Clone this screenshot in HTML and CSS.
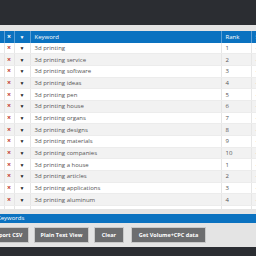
FILE: index.html
```html
<!DOCTYPE html>
<html lang="en">
<head>
    <meta charset="UTF-8">
    <title>Keyword Tool</title>
    <link rel="stylesheet" href="styles.css">
</head>
<body>

    <!-- Top bar -->
    <header class="topbar"></header>

    <div class="page">
        <!-- Keyword table -->
        <section class="table-wrap">
            <table class="kw-table">
                <colgroup>
                    <col class="c-sel">
                    <col class="c-del">
                    <col class="c-flt">
                    <col class="c-kw">
                    <col class="c-rank">
                    <col class="c-more">
                </colgroup>
                <thead>
                    <tr>
                        <th></th>
                        <th class="x">&times;</th>
                        <th class="arrow">&#9660;</th>
                        <th class="left">Keyword</th>
                        <th class="left">Rank</th>
                        <th class="left">Search</th>
                    </tr>
                </thead>
                <tbody id="rows"></tbody>
            </table>
        </section>

        <div class="strip"></div>

        <!-- Keywords bar -->
        <div class="bar">Keywords</div>

        <!-- Buttons -->
        <div class="actions">
            <button class="btn w-csv">Export CSV</button>
            <button class="btn w-plain">Plain Text View</button>
            <button class="btn w-clear">Clear</button>
            <button class="btn w-vol">Get Volume+CPC data</button>
        </div>
    </div>

    <footer class="bottombar"></footer>

    <script>
        const keywords = [
            ['3d printing', 1], ['3d printing service', 2], ['3d printing software', 3],
            ['3d printing ideas', 4], ['3d printing pen', 5], ['3d printing house', 6],
            ['3d printing organs', 7], ['3d printing designs', 8], ['3d printing materials', 9],
            ['3d printing companies', 10], ['3d printing a house', 1], ['3d printing articles', 2],
            ['3d printing applications', 3], ['3d printing aluminum', 4], ['3d printing 3d printer', 5]
        ];

        const rows = document.getElementById('rows');
        keywords.forEach(k => {
            const tr = document.createElement('tr');
            tr.innerHTML = `
                <td></td>
                <td class="x">&times;</td>
                <td class="arrow">&#9660;</td>
                <td>${k[0]}</td>
                <td>${k[1]}</td>
                <td>&middot;</td>
            `;
            rows.appendChild(tr);
        });
    </script>

</body>
</html>
```

FILE: styles.css
```css
body {
    margin: 0;
    width: 256px;
    height: 256px;
    overflow: hidden;
    font-family: "Open Sans", sans-serif;
    background-color: #e4e4e4;
}
.topbar {
    height: 25px;
    background-color: #2b2d32;
}
.page {
    margin-left: -14px;
    width: 300px;
    padding-top: 6px;
}
.table-wrap {
    height: 178px;
    overflow: hidden;
    background-color: white;
}
.kw-table {
    table-layout: fixed;
    border-collapse: collapse;
    width: 300px;
    font-size: 6px;
    color: #555;
}
.c-sel { width: 18px; }
.c-del { width: 10px; }
.c-flt { width: 16px; }
.c-kw { width: 191px; }
.c-rank { width: 30px; }
.c-more { width: 35px; }
.kw-table th {
    background-color: #0b72c0;
    color: white;
    font-weight: normal;
    height: 11.5px;
    padding: 0 4px;
    border-right: 1px solid #5b9fd6;
}
.kw-table td {
    height: 10.7px;
    padding: 0 4px;
    line-height: 10px;
    border-right: 1px solid #e6e6e6;
    border-bottom: 1px solid #ececec;
    white-space: nowrap;
    overflow: hidden;
}
.kw-table tbody tr:nth-child(even) {
    background-color: #f2f2f2;
}
.kw-table .x {
    padding: 0;
    text-align: center;
    font-size: 7px;
    font-weight: bold;
    color: #c0392b;
}
.kw-table th.x {
    color: white;
}
.kw-table .arrow {
    padding: 0;
    text-align: center;
    font-size: 5px;
    color: #222;
}
.kw-table th.arrow {
    color: white;
}
.left {
    text-align: left;
}
.strip {
    height: 5px;
    background-color: #e4e4e4;
}
.bar {
    height: 9px;
    line-height: 9px;
    padding-left: 11px;
    font-size: 6px;
    color: white;
    background-color: #0b72c0;
}
.actions {
    display: flex;
    gap: 5px;
    padding: 4px 0 0 0;
    height: 20px;
}
.btn {
    height: 16px;
    padding: 0;
    border: 1px solid #c9c9c9;
    background-color: #6c6d6f;
    color: white;
    font-family: "Open Sans", sans-serif;
    font-size: 5.5px;
    font-weight: bold;
}
.w-csv { width: 43px; }
.w-plain { width: 55px; }
.w-clear { width: 30px; }
.w-vol { width: 75px; margin-left: 2px; }
.bottombar {
    height: 12px;
    background-color: #2b2d32;
}
```
